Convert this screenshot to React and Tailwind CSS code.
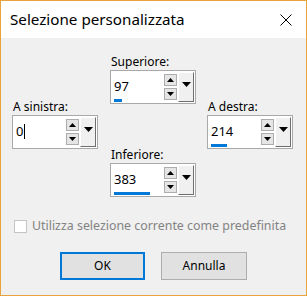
import React from 'react';

function SpinBox({ value, bar, cursor }) {
  return (
    <div className="relative w-[86px] h-[34px] border border-[#a9a9a9] bg-white flex">
      <div className="flex-1 flex items-center pl-[3px] pb-[1px] text-[13px] text-black leading-none">
        <span>{value}</span>
        {cursor && <span className="w-[1px] h-[15px] bg-black ml-[1px]" />}
      </div>
      <div className="flex flex-col justify-between pt-[3px] pb-[3px] mr-[1px]">
        <div className="w-[13px] h-[12px] border border-[#adadad] bg-[#e5e5e5] flex items-center justify-center">
          <svg width="7" height="4" viewBox="0 0 7 4"><path d="M0 4 L3.5 0 L7 4 Z" fill="#000" /></svg>
        </div>
        <div className="w-[13px] h-[12px] border border-[#adadad] bg-[#e5e5e5] flex items-center justify-center">
          <svg width="7" height="4" viewBox="0 0 7 4"><path d="M0 0 L3.5 4 L7 0 Z" fill="#000" /></svg>
        </div>
      </div>
      <div className="w-[16px] my-[1px] mr-[1px] bg-[#f0f0f0] border-r border-b border-[#6e6e6e] border-l border-l-white border-t border-t-white flex justify-center pt-[9px]">
        <svg width="9" height="5" viewBox="0 0 9 5"><path d="M0 0 L4.5 5 L9 0 Z" fill="#000" /></svg>
      </div>
      <div className="absolute left-[3px] bottom-[1px] h-[3px] bg-[#0078d7]" style={{ width: bar }} />
    </div>
  );
}

function Field({ label, value, bar, cursor }) {
  return (
    <div className="flex flex-col">
      <span className="h-[15px] text-[12px] leading-[14px] text-black pl-[1px]">{label}</span>
      <SpinBox value={value} bar={bar} cursor={cursor} />
    </div>
  );
}

export default function App() {
  return (
    <div className="w-[307px] h-[296px] border border-[#e8a33c] bg-[#f0f0f0] flex flex-col font-['Segoe_UI','Noto_Sans',sans-serif]">
      <div className="h-[37px] bg-white flex items-center justify-between pl-[9px] pr-[14px]">
        <span className="text-[15.2px] text-black leading-none">Selezione personalizzata</span>
        <svg width="12" height="12" viewBox="0 0 12 12">
          <path d="M0.5 0.5 L11.5 11.5 M11.5 0.5 L0.5 11.5" stroke="#000" strokeWidth="1" />
        </svg>
      </div>

      <div className="flex pl-[11px] gap-[12px]">
        <div className="pt-[62px]">
          <Field label="A sinistra:" value="0" bar={0} cursor />
        </div>
        <div className="pt-[17px] flex flex-col gap-[44px]">
          <Field label="Superiore:" value="97" bar={8} />
          <Field label="Inferiore:" value="383" bar={36} />
        </div>
        <div className="pt-[62px] -ml-[1px]">
          <Field label="A destra:" value="214" bar={16} />
        </div>
      </div>

      <div className="flex items-center pl-[13px] mt-[23px] gap-[5px]">
        <div className="w-[13px] h-[13px] border border-[#c4c4c4] bg-white" />
        <span className="text-[12.4px] leading-none text-[#838383]">Utilizza selezione corrente come predefinita</span>
      </div>

      <div className="flex justify-center gap-[16px] mt-[19px]">
        <button className="w-[85px] h-[28px] border-2 border-[#0078d7] bg-[#e1e1e1] text-[12px] text-black">OK</button>
        <button className="w-[86px] h-[28px] border border-[#adadad] bg-[#e1e1e1] text-[12px] text-black">Annulla</button>
      </div>
    </div>
  );
}
